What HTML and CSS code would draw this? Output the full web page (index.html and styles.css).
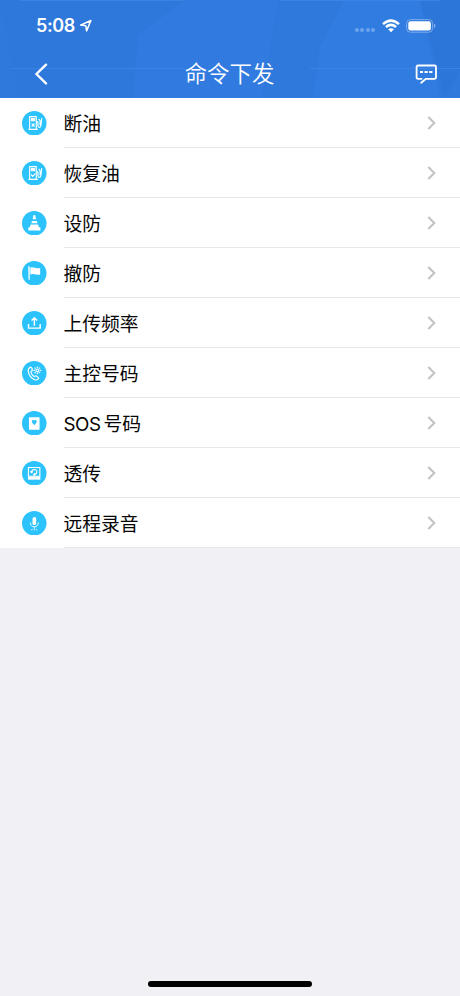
FILE: index.html
```html
<!DOCTYPE html>
<html lang="zh-CN">
<head>
<meta charset="utf-8">
<meta name="viewport" content="width=device-width">
<title>命令下发</title>
<link rel="stylesheet" href="styles.css">
</head>
<body>
<div class="screen">
  <header class="header">
    <svg class="facets" viewBox="0 0 460 98" preserveAspectRatio="none">
      <path d="M0 0H185L138 35 133 98H20Z" fill="#2e78dc"/>
      <path d="M185 0H278L262 98H133L138 35Z" fill="#317be0"/>
      <path d="M280 0H345L320 45 313 98H262Z" fill="#2f78dc"/>
      <path d="M345 0H420L440 98H313L320 45Z" fill="#317ce0"/>
      <path d="M420 0H460V70L445 98Z" fill="#2d76d9"/>
      <path d="M12 68.5H185M310 68.5H460M20 .5H185M280 .5H440" stroke="#3b82e2" stroke-width="1"/>
    </svg>
    <div class="status">
      <span class="time">5:08</span>
      <svg class="location" width="14" height="14" viewBox="0 0 14 14"><path d="M1.6 6.1 11.9 1.5 7.6 11.9 6.8 6.8Z" fill="none" stroke="#fff" stroke-width="1.5" stroke-linejoin="round"/></svg>
      <span class="signal"><i></i><i></i><i></i><i></i></span>
      <svg class="wifi" width="18" height="14" viewBox="0 0 18 14" fill="none" stroke="#fff" stroke-width="2.5"><path d="M1 5.1Q9-1.8 17 5.1M3.9 8Q9 3.8 14.1 8"/><path d="M9 13.2 6.1 10.3Q9 8 11.9 10.3Z" fill="#fff" stroke="none"/></svg>
      <svg class="battery" width="30" height="14" viewBox="0 0 30 14"><rect x=".6" y=".6" width="26" height="12.6" rx="3.8" fill="none" stroke="#7dabed"/><rect x="2.3" y="2.2" width="22.6" height="9.4" rx="2.3" fill="#fff"/><path d="M28 4.8Q29.4 5.4 29.4 7T28 9.2Z" fill="#8bb6f0"/></svg>
    </div>
    <nav class="nav">
      <svg class="back" width="14" height="22" viewBox="0 0 14 22"><path d="M12 1.7 2.4 11 12 20.4" fill="none" stroke="#fff" stroke-width="2.4" stroke-linecap="round" stroke-linejoin="round"/></svg>
      <h1 class="title">命令下发</h1>
      <svg class="message" width="22" height="20" viewBox="0 0 22 20" fill="none" stroke="#fff" stroke-width="1.8" stroke-linecap="round" stroke-linejoin="round"><path d="M6.6 14.8H3Q1.6 14.8 1.6 13V3Q1.6 1.5 3 1.5H19.5Q21 1.5 21 3V13Q21 14.8 19.5 14.8H11L6.2 18.7"/><path d="M5 8H8M9.5 8H12.7M14.2 8H17.4" stroke-linecap="butt"/></svg>
    </nav>
  </header>

  <ul class="list">
    <li class="row">
      <svg class="icon" viewBox="0 0 24 24"><circle cx="12" cy="12" r="12"/><g class="line"><path d="M7.5 17.5V5.5H14V17.5M6.4 18H15.4M14.2 10.5H15.6V14.5Q15.6 16 17 16T18.5 14.5L19.3 7M16.3 7.7 17.7 9.5V14"/><path d="M9.2 7.3H12.4V9.6H9.2Z" class="solid"/><path d="m9.5 12.3 2.8 3m0-3-2.8 3"/></g></svg>
      <div class="cell"><span class="label">断油</span><svg class="chevron" viewBox="0 0 9 14"><path d="m1.3 1 6 6-6 6"/></svg></div>
    </li>
    <li class="row">
      <svg class="icon" viewBox="0 0 24 24"><circle cx="12" cy="12" r="12"/><g class="line"><path d="M7.5 17.5V5.5H14V17.5M6.4 18H15.4M14.2 10.5H15.6V14.5Q15.6 16 17 16T18.5 14.5L19.3 7M16.3 7.7 17.7 9.5V14"/><path d="M9.2 7.3H12.4V9.6H9.2Z" class="solid"/><path d="m8.8 13.2 1.7 1.9 2.5-2.7"/></g></svg>
      <div class="cell"><span class="label">恢复油</span><svg class="chevron" viewBox="0 0 9 14"><path d="m1.3 1 6 6-6 6"/></svg></div>
    </li>
    <li class="row">
      <svg class="icon" viewBox="0 0 24 24"><circle cx="12" cy="12" r="12"/><path class="fill" d="M11.4 4H12.8L13.9 8H10.3ZM9.7 9.7H14.5L15.1 12H9.1ZM8.4 13.3H15.7L16.6 16H18V19H6.2V16H7.7Z"/></svg>
      <div class="cell"><span class="label">设防</span><svg class="chevron" viewBox="0 0 9 14"><path d="m1.3 1 6 6-6 6"/></svg></div>
    </li>
    <li class="row">
      <svg class="icon" viewBox="0 0 24 24"><circle cx="12" cy="12" r="12"/><path class="fill" d="M6.1 5.5Q7.3 4.7 7.6 6V18.3H6.4ZM8.2 6.3Q10.5 5.7 12.5 6.6 14.5 7.4 17.8 6.8V13.2Q15 13.9 12.4 13.1 10.4 12.5 8.2 13.2Z"/></svg>
      <div class="cell"><span class="label">撤防</span><svg class="chevron" viewBox="0 0 9 14"><path d="m1.3 1 6 6-6 6"/></svg></div>
    </li>
    <li class="row">
      <svg class="icon" viewBox="0 0 24 24"><circle cx="12" cy="12" r="12"/><path class="line upload" d="M6.4 12.8V16.8H17.8V12.8M12.1 14.4V7M9.4 9.4 12.1 6.6 14.8 9.4"/></svg>
      <div class="cell"><span class="label">上传频率</span><svg class="chevron" viewBox="0 0 9 14"><path d="m1.3 1 6 6-6 6"/></svg></div>
    </li>
    <li class="row">
      <svg class="icon" viewBox="0 0 24 24"><circle cx="12" cy="12" r="12"/><g class="line"><path d="M8.3 6Q10.2 6.3 10.1 9.3L8.6 10.7Q9.3 13.7 12 15.3L13.8 14.4Q15.9 15.5 16.5 17.1 14.7 19.2 12.4 18.4 7 15.7 6.1 9.9 6 6.9 8.3 6Z"/><circle class="hollow" cx="15" cy="9.2" r="1.4"/><path d="M15 5.3V6.8M15 11.6V13.1M11.2 9.2H12.6M17.4 9.2H18.9M12.3 6.5 13.3 7.5M16.7 10.9 17.7 11.9M17.7 6.5 16.7 7.5M13.3 10.9 12.3 11.9"/></g></svg>
      <div class="cell"><span class="label">主控号码</span><svg class="chevron" viewBox="0 0 9 14"><path d="m1.3 1 6 6-6 6"/></svg></div>
    </li>
    <li class="row">
      <svg class="icon" viewBox="0 0 24 24"><circle cx="12" cy="12" r="12"/><rect class="fill" x="6.8" y="6" width="10.4" height="12.4" rx=".7"/><path d="M12 14 10 11.6Q9.1 10.1 10 9.1 11.2 8.3 12 9.2 12.8 8.3 14 9.1 14.9 10.1 14 11.6Z"/></svg>
      <div class="cell"><span class="label"><span class="latin">SOS</span>号码</span><svg class="chevron" viewBox="0 0 9 14"><path d="m1.3 1 6 6-6 6"/></svg></div>
    </li>
    <li class="row">
      <svg class="icon" viewBox="0 0 24 24"><circle cx="12" cy="12" r="12"/><path class="line" d="M6.3 6.4H17.5V15H6.3Z"/><path class="fill" d="M5.8 15.3H18V18.3H5.8Z"/><path class="line" d="M9.2 11.1Q9.4 8.4 12.3 8.3 14.8 8.5 14.5 10.9 14 13.3 11.4 13.4M8.2 10 9.2 11.5 10.7 10.3M12.7 12 11.3 13.4 12.7 14.5"/></svg>
      <div class="cell"><span class="label">透传</span><svg class="chevron" viewBox="0 0 9 14"><path d="m1.3 1 6 6-6 6"/></svg></div>
    </li>
    <li class="row">
      <svg class="icon" viewBox="0 0 24 24"><circle cx="12" cy="12" r="12"/><rect class="fill" x="10.3" y="5.8" width="3.6" height="8" rx="1.8"/><path class="line mic" d="M8.2 11.3Q8.4 15.4 12.1 15.5 15.8 15.4 16 11.3M12.1 15.7V17.5"/><path d="M9 18.4H15.5" stroke="#fff" stroke-width=".9" stroke-dasharray="1.3 1"/></svg>
      <div class="cell"><span class="label">远程录音</span><svg class="chevron" viewBox="0 0 9 14"><path d="m1.3 1 6 6-6 6"/></svg></div>
    </li>
  </ul>
  <div class="home"></div>
</div>
</body>
</html>
```
FILE: styles.css
```css
* { box-sizing: border-box; }

body {
  margin: 0;
  background: #f0f0f5;
  font-family: "Liberation Sans", "Noto Sans CJK SC", sans-serif;
}

.screen {
  display: flex;
  flex-direction: column;
  width: 460px;
  height: 996px;
  overflow: hidden;
}

.header {
  position: relative;
  height: 98px;
  background: #2f79dd;
  color: #fff;
}

.facets {
  position: absolute;
  inset: 0;
  width: 100%;
  height: 100%;
}

.status {
  position: relative;
  display: flex;
  align-items: center;
  height: 48px;
  padding: 3px 24px 0 36px;
}

.time {
  width: 39px;
  font: 600 18px/20px Inter, sans-serif;
  letter-spacing: -0.4px;
}

.location { margin-left: 4px; }

.signal {
  display: flex;
  gap: 1.4px;
  margin: 8px 7px 0 auto;
}

.signal i {
  width: 4px;
  height: 4px;
  border-radius: 50%;
  background: #6da2ec;
}

.wifi { margin-right: 6px; }

.nav {
  position: relative;
  display: flex;
  align-items: center;
  justify-content: space-between;
  height: 50px;
  padding: 0 23px 0 34px;
}

.back { margin-top: 1px; }

.message { margin-top: 2px; }

.title {
  margin: 0 10px 2px 6px;
  font: 350 22.4px/34px "Noto Sans CJK SC", sans-serif;
}

.list {
  margin: 0;
  padding: 0;
  list-style: none;
  background: #fff;
}

.row {
  display: flex;
  align-items: center;
  height: 50px;
  padding-left: 22px;
}

.icon {
  flex: none;
  width: 24.5px;
  height: 24.5px;
  margin-right: 17px;
  fill: #2cc2fb;
}

.icon .fill { fill: #fff; }

.icon .line {
  fill: none;
  stroke: #fff;
  stroke-width: 1.1;
  stroke-linejoin: round;
}

.icon .hollow { fill: none; }

.icon .upload { stroke-width: 1.4; }

.icon .mic { stroke-width: 0.9; }

.icon .solid { fill: #fff; }

.cell {
  display: flex;
  flex: 1;
  align-items: center;
  justify-content: space-between;
  height: 50px;
  padding-right: 24px;
  box-shadow: inset 0 -1px #e8e8ea;
}

.label {
  color: #050505;
  font: 400 18.8px/28px "Noto Sans CJK SC", sans-serif;
}

.latin {
  margin-right: 3px;
  font-family: Inter, sans-serif;
  letter-spacing: -0.5px;
  line-height: 1;
}

.chevron {
  width: 9px;
  height: 14px;
  fill: none;
  stroke: #c3c3c6;
  stroke-width: 2.1;
}

.home {
  width: 164px;
  height: 6px;
  margin: auto auto 9px;
  border-radius: 3px;
  background: #000;
}
```
